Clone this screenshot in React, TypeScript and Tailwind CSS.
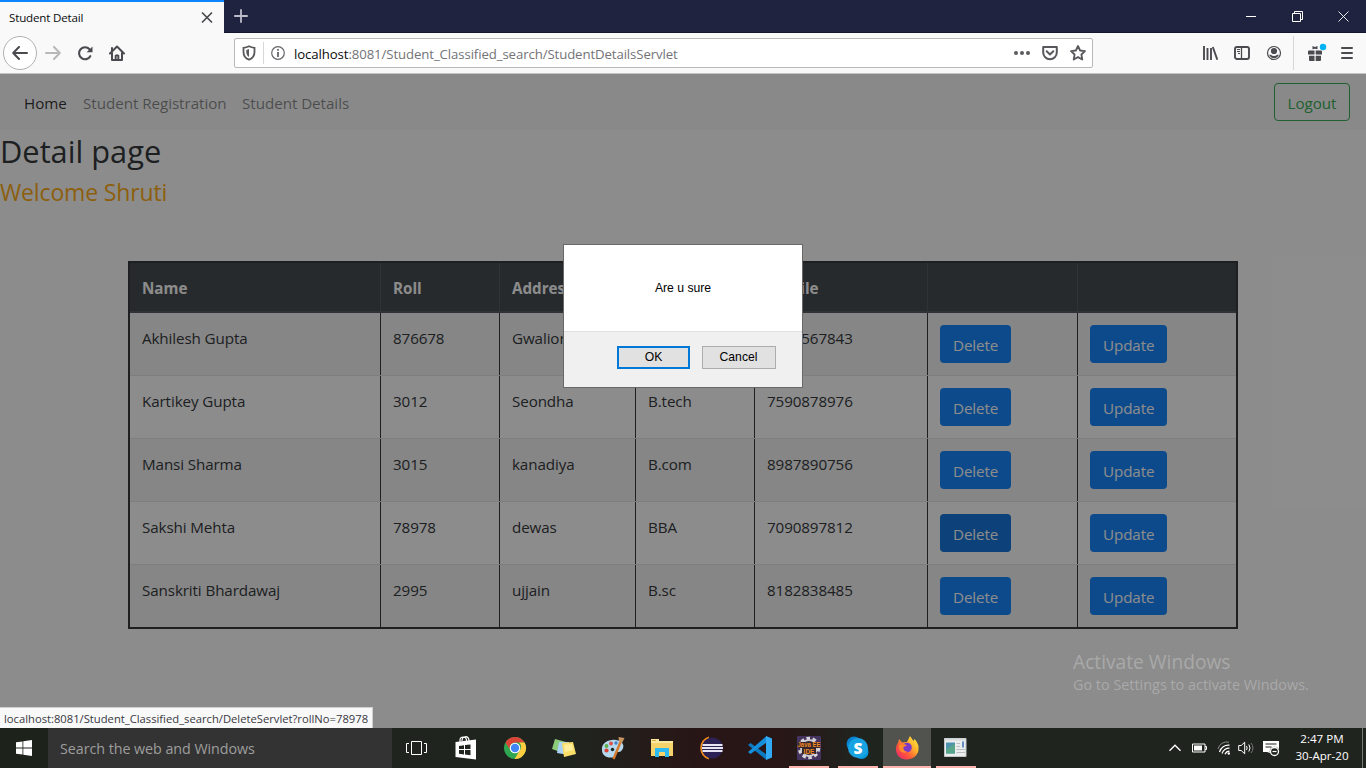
import type { ReactNode } from "react";

const students = [
  { name: "Akhilesh Gupta", roll: "876678", address: "Gwalior", course: "", mobile: "9234567843" },
  { name: "Kartikey Gupta", roll: "3012", address: "Seondha", course: "B.tech", mobile: "7590878976" },
  { name: "Mansi Sharma", roll: "3015", address: "kanadiya", course: "B.com", mobile: "8987890756" },
  { name: "Sakshi Mehta", roll: "78978", address: "dewas", course: "BBA", mobile: "7090897812", hovered: true },
  { name: "Sanskriti Bhardawaj", roll: "2995", address: "ujjain", course: "B.sc", mobile: "8182838485" },
];

const COLUMNS = "grid grid-cols-[250px_119px_136px_119px_173px_150px_159px]";

function TitleBar() {
  return (
    <div className="flex h-[33px] border-b border-[#14152e] bg-[#202340]">
      <div className="flex h-[33px] w-[224px] shrink-0 items-center justify-between border-t-2 border-[#0a84ff] bg-[#f9f9fa] pl-[9px] pr-[11px]">
        <span className="pt-px text-[11.6px] tracking-[-0.18px] text-[#0c0c0d]">Student Detail</span>
        <svg width="12" height="12" viewBox="0 0 12 12" stroke="#4a4a4f" strokeWidth="1.7" strokeLinecap="round">
          <path d="M1.5 1l9 9M10.500 1l-9 9" />
        </svg>
      </div>
      <div className="flex w-[33px] items-center justify-center">
        <svg width="14" height="14" viewBox="0 0 14 14" stroke="#bcbccb" strokeWidth="1.8" strokeLinecap="round">
          <path d="M7 .9v12.200M.9 7h12.200" />
        </svg>
      </div>
      <div className="ml-auto flex items-center gap-9 pr-[17px]">
        <svg width="10" height="11" viewBox="0 0 10 11" stroke="#fff"><path d="M0 5.500h10" /></svg>
        <svg width="11" height="11" viewBox="0 0 11 11" fill="none" stroke="#fff" className="-mr-px"><path d="M.5 2.500h8v8h-8zM2.500 2.500v-2h8v8h-2" /></svg>
        <svg width="11" height="11" viewBox="0 0 11 11" stroke="#fff" strokeWidth=".9"><path d="M.5 .5l10 10M10.500 .5l-10 10" /></svg>
      </div>
    </div>
  );
}

function Toolbar() {
  return (
    <div className="flex h-[41px] items-center border-b border-[#c4c4c6] bg-[#f9f9fa] pl-[3px]">
      <div className="flex h-[34px] w-[34px] items-center justify-center rounded-full border border-[#b1b1b3] bg-white">
        <svg width="16" height="14" viewBox="0 0 16 14" fill="none" stroke="#4a4a4f" strokeWidth="2" strokeLinecap="round" strokeLinejoin="round"><path d="M15 7H1.500M7 1L1.200 7 7 13" /></svg>
      </div>
      <svg className="ml-2" width="16" height="14" viewBox="0 0 16 14" fill="none" stroke="#b9b9bb" strokeWidth="2" strokeLinecap="round" strokeLinejoin="round"><path d="M1 7h13.500M9 1l5.800 6L9 13" /></svg>
      <svg className="ml-4" width="16" height="16" viewBox="0 0 16 16" fill="none" stroke="#4a4a4f" strokeWidth="2.100" strokeLinecap="round">
        <path d="M13.300 11.200A6 6 0 1 1 12.500 4.200" />
        <path d="M15.500 1.500v5.700H9.700z" fill="#4a4a4f" stroke="none" />
      </svg>
      <svg className="ml-4" width="16" height="16" viewBox="0 0 16 16" fill="none" stroke="#4a4a4f" strokeWidth="2" strokeLinecap="round" strokeLinejoin="round">
        <path d="M1 8.500L8 1.500l7 7M3 8v7h10V8M3 3v3" />
        <path d="M6.500 15v-4.500h3V15" strokeWidth="1.600" />
        <path d="M8 9.500v5.500" strokeWidth="1" />
      </svg>
      <div className="ml-[109px] flex h-[30px] w-[859px] items-center rounded-[2px] border border-[#b9b9bb] bg-white">
        <svg className="ml-[7px]" width="14" height="16" viewBox="0 0 14 16" fill="none" stroke="#58585c" strokeWidth="1.800">
          <path d="M1.500 2.800Q4.500 2.500 7 1.300q2.500 1.200 5.500 1.500V7c0 4-2.200 6.500-5.500 7.700C3.700 13.500 1.500 11 1.500 7z" />
          <path d="M7 4v8C5 10.800 4.300 9 4.300 7V4.900Q5.800 4.600 7 4z" fill="#58585c" stroke="none" />
        </svg>
        <div className="ml-[7px] h-[22px] w-px bg-[#d7d7db]" />
        <svg className="ml-[7px]" width="14" height="14" viewBox="0 0 14 14" fill="none" stroke="#65656a">
          <circle cx="7" cy="7" r="6.300" strokeWidth="1.200" /><path d="M7 3v1.700M7 6v5" strokeWidth="1.800" />
        </svg>
        <span className="ml-[9px] pt-[3px] text-[13.200px] tracking-[-0.095px] text-[#737377]"><span className="text-[#0c0c0d]">localhost</span>:8081/Student_Classified_search/StudentDetailsServlet</span>
        <div className="ml-auto flex items-center gap-3 pr-[6px]">
          <svg width="16" height="16" viewBox="0 0 16 16" fill="#5b5b5f"><circle cx="2" cy="8" r="2" /><circle cx="8" cy="8" r="2" /><circle cx="14" cy="8" r="2" /></svg>
          <svg width="16" height="16" viewBox="0 0 16 16" fill="none" stroke="#58585c" strokeWidth="2" strokeLinecap="round" strokeLinejoin="round"><path d="M1.200 2h13.600v5.500a6.800 6.800 0 0 1-13.600 0z" /><path d="M4.700 6.300L8 9.500l3.300-3.200" /></svg>
          <svg width="16" height="16" viewBox="0 0 16 16" fill="none" stroke="#58585c" strokeWidth="1.800" strokeLinejoin="round"><path d="M8 1l2.100 4.500 4.900.6-3.600 3.400.9 5L8 12.100l-4.300 2.400.9-5L1 6.100l4.900-.6z" /></svg>
        </div>
      </div>
      <div className="ml-auto flex items-center pr-3">
        <svg width="16" height="16" viewBox="0 0 16 16" stroke="#4a4a4f" strokeWidth="1.900"><path d="M2 1v14M5.500 3v12M9 3v12M10.800 2L15.300 14.700" /></svg>
        <svg className="ml-4" width="16" height="16" viewBox="0 0 16 16" fill="none" stroke="#4a4a4f"><rect x="1" y="2" width="14" height="12" rx="2" strokeWidth="1.900" /><path d="M7.500 2v12" strokeWidth="1.300" /><path d="M3 4.500h3M3 6.500h3M4 8.500h2" /></svg>
        <svg className="ml-4" width="16" height="16" viewBox="0 0 16 16" fill="#4a4a4f"><circle cx="8" cy="8" r="6.500" fill="none" stroke="#4a4a4f" strokeWidth="1.200" /><circle cx="8" cy="6" r="3.100" /><path d="M3.200 9.800h1.600c1.700 1.600 4.700 1.600 6.400 0h1.600c-.7 2-2.500 3.500-4.800 3.500s-4.100-1.500-4.800-3.500z" /></svg>
        <div className="ml-[11px] h-[34px] w-px bg-[#d7d7db]" />
        <svg className="ml-[13px]" width="20" height="20" viewBox="0 0 20 20" fill="#4a4a4f">
          <path d="M1 8.500Q1 7.500 2 7.500h5.500v4H1zM8.700 7.500H14q1 0 1 1v3H8.700zM2 12.700h5.500V18H3q-1 0-1-1zM8.700 12.700H14V17q0 1-1 1H8.700zM5.500 3L8 4l2.500-1v3.200L8 5.700l-2.500.5z" />
          <circle cx="16" cy="4" r="3.200" fill="#00b3f4" />
        </svg>
        <svg className="ml-[13px]" width="14" height="16" viewBox="0 0 14 16" stroke="#4a4a4f" strokeWidth="2" strokeLinecap="round"><path d="M2 3h10M2 8h10M2 13h10" /></svg>
      </div>
    </div>
  );
}

function PrimaryButton({ children, pressed = false }: { children: ReactNode; pressed?: boolean }) {
  return (
    <button className={`${pressed ? "bg-[#0069d9]" : "bg-[#007bff]"} flex h-[38px] items-center rounded-[4px] px-[13px] pt-px text-[15.200px] tracking-[-0.1px] leading-[24px] text-white`}>
      {children}
    </button>
  );
}

function StudentTable() {
  return (
    <div className="mx-auto mt-[56px] w-[1110px] border-2 border-[#212529] text-[15.200px] leading-[24px] tracking-[-0.11px]">
      <div className={`${COLUMNS} h-[50px] border-b-2 border-[#454d55] bg-[#343a40] font-bold text-white`}>
        {["Name", "Roll", "Address", "", "Mobile", "", ""].map((label, i) => (
          <div key={i} className={`${i ? "border-l border-[#454d55]" : ""} px-3 pt-[13px] tracking-normal`}>{label}</div>
        ))}
      </div>
      {students.map((s, row) => (
        <div key={s.roll} className={`${COLUMNS} ${row % 2 ? "" : "bg-[#f2f2f2]"} ${row < 4 ? "h-[63px] border-b border-[#dee2e6]" : "h-[62px]"}`}>
          {[s.name, s.roll, s.address, s.course, s.mobile].map((value, i) => (
            <div key={i} className={`${i ? "border-l border-[#212529]" : ""} px-3 pt-[13px]`}>{value}</div>
          ))}
          <div className="border-l border-[#212529] px-3 pt-3"><PrimaryButton pressed={s.hovered}>Delete</PrimaryButton></div>
          <div className="border-l border-[#212529] px-3 pt-3"><PrimaryButton>Update</PrimaryButton></div>
        </div>
      ))}
    </div>
  );
}

function ConfirmDialog() {
  return (
    <div className="absolute left-[563px] top-[170px] flex h-[144px] w-[240px] flex-col border border-[#686868] bg-white font-['Liberation_Sans',sans-serif] text-[12.200px] text-black">
      <div className="flex h-[86px] items-center justify-center">Are u sure</div>
      <div className="flex flex-1 items-start justify-end gap-3 border-t border-[#dfdfdf] bg-[#f0f0f0] pr-[26px] pt-[14px]">
        <button className="h-[23px] w-[73px] border-2 border-[#0078d7] bg-[#e1e1e1]">OK</button>
        <button className="h-[23px] w-[74px] border border-[#adadad] bg-[#e1e1e1] pr-px">Cancel</button>
      </div>
    </div>
  );
}

function WebPage() {
  return (
    <main className="relative h-[654px] overflow-hidden bg-white text-[#212529]">
      <nav className="flex h-14 items-center bg-[#f8f9fa] pl-6 pr-4 text-[15.200px] tracking-[-0.05px]">
        <a className="w-[59px] pt-[2px] text-black/90">Home</a>
        <a className="w-[159px] pt-[2px] text-black/50">Student Registration</a>
        <a className="pt-[2px] text-black/50">Student Details</a>
        <button className="ml-auto h-[38px] w-[76px] rounded-[4px] border border-[#28a745] pt-[2px] text-[#28a745]">Logout</button>
      </nav>
      <h2 className="mb-2 h-[38px] text-[30.800px] leading-[42px]">Detail page</h2>
      <h4 className="h-[29px] text-[23px] leading-[32px] tracking-[-0.15px] text-[#ffa500]">Welcome Shruti</h4>
      <StudentTable />
      <div className="absolute inset-0 bg-[#1a1a1a]/50" />
      <ConfirmDialog />
      <div className="absolute left-[1073px] top-[575px] whitespace-nowrap text-[#a9a9a9]">
        <div className="text-[19.200px] leading-[25px]">Activate Windows</div>
        <div className="text-[14.400px] leading-[21px]">Go to Settings to activate Windows.</div>
      </div>
      <div className="absolute bottom-0 left-0 flex h-[21px] w-[373px] items-center whitespace-nowrap border-r border-t border-[#d0d0d2] bg-[#f9f9fa] pl-1 pt-[2px] text-[11.220px] text-[#38383d]">
        localhost:8081/Student_Classified_search/DeleteServlet?rollNo=78978
      </div>
    </main>
  );
}

function AppIcon({ children }: { children: ReactNode }) {
  return <svg width="24" height="24" viewBox="0 0 24 24" fill="none">{children}</svg>;
}

const taskbarApps: { id: string; state?: "open" | "active"; icon: ReactNode }[] = [
  { id: "taskview", icon: <AppIcon><path d="M6.500 5.500h10v13h-10zM4 7.500H1.500v9H4M19 7.500h2.500v9H19" stroke="#fff" strokeWidth="1" /></AppIcon> },
  { id: "store", icon: <AppIcon><path d="M1.500 6L22 3.500v20L1.500 21z" fill="#fff" /><path d="M6 8V4c0-4 6-4 6.500 0v3M8 5c0-5 6-6 7-1v3" stroke="#fff" strokeWidth="1.200" /><path d="M5 10l5-.7V13H5zM11 9.100l5.500-.7V13H11zM5 14h5v4.400l-5-.6zM11 14h5.500v5.200l-5.500-.6z" fill="#20241f" /></AppIcon> },
  {
    id: "chrome", icon: <AppIcon>
      <circle cx="12" cy="12" r="11" fill="#2fa650" />
      <path d="M2.500 6.500A11 11 0 0 1 21.600 6.600H12a5.300 5.300 0 0 0-4.700 8z" fill="#db4437" />
      <path d="M21.600 6.600A11 11 0 0 1 11.600 23l4.900-8.200a5.300 5.300 0 0 0-.5-8.200z" fill="#ffcd40" />
      <circle cx="12" cy="12" r="5.300" fill="#fff" /><circle cx="12" cy="12" r="4.200" fill="#4285f4" />
    </AppIcon>,
  },
  { id: "notes", icon: <AppIcon><path d="M3 3l11 3-3 11L0 13z" fill="#8ccb78" /><path d="M7 6h10v13L5 17z" fill="#a9d2f5" /><path d="M10 7l11-1 3 12-12 3z" fill="#f9df69" /><path d="M12 9l8-1 1 6-8 2z" fill="#ffef9b" /></AppIcon> },
  {
    id: "paint", icon: <AppIcon>
      <path d="M1 14C0 7 8 3 15 4c7 1 9 6 6 10-2 3-4 1-6 3-1 2 1 3-2 4-6 2-12-1-12-7z" fill="#b5d8ee" />
      <circle cx="5.500" cy="14.500" r="2.100" fill="#d64036" /><circle cx="5.500" cy="10" r="1.900" fill="#5fae4a" /><circle cx="10" cy="7.500" r="1.900" fill="#df5144" /><circle cx="15" cy="7" r="1.700" fill="#4682c7" /><circle cx="11.500" cy="13.500" r="1.700" fill="#20241f" />
      <path d="M12.500 23L20 5" stroke="#d8792b" strokeWidth="2.400" /><path d="M17.500 1l6 1-2.500 5-3-1z" fill="#c99661" />
    </AppIcon>,
  },
  { id: "explorer", icon: <AppIcon><path d="M1 3h8v2h14v15H1z" fill="#f7d36b" /><path d="M1 3h8v2h14v2H1z" fill="#fbe8a1" /><path d="M2 4h4v1H2z" fill="#d7a936" /><path d="M5 12h14v9h-4v-5H9v5H5z" fill="#2dbbf1" /></AppIcon> },
  { id: "eclipse", icon: <AppIcon><path d="M10 1.500A11 11 0 0 0 10 22.500" stroke="#f18c1c" strokeWidth="2.200" /><circle cx="13.300" cy="12" r="10.500" fill="#2c2255" /><path d="M3.500 9h20M3 12h21M3.500 15h20" stroke="#e8e6f2" strokeWidth="1.800" /></AppIcon> },
  { id: "vscode", icon: <AppIcon><path d="M0 9l2.500-2L20 19.500 18.500 24z" fill="#0c79c1" /><path d="M0 16l2.500 2L20 5.500 18.500 0z" fill="#168fdb" /><path d="M18 0l6 2.500v19L18 24z" fill="#32a9f3" /></AppIcon> },
  {
    id: "javaee", state: "open", icon: <AppIcon>
      <rect width="24" height="24" rx="1" fill="#44325f" />
      <circle cx="12" cy="12" r="9.500" stroke="#d7d5d9" strokeWidth="3.500" strokeDasharray="3.500 2.500" />
      <circle cx="12" cy="12" r="8" fill="#2e243b" stroke="#d0ccd2" strokeWidth="2" />
      <path d="M1 6h22v6h-4v6H5v-6H1z" fill="#35252d" />
      <text x="12" y="11.300" textAnchor="middle" fill="#f08a25" fontSize="6.500" fontWeight="700" textLength="23" lengthAdjust="spacingAndGlyphs" className="font-['Liberation_Sans']">Java EE</text>
      <text x="12" y="18" textAnchor="middle" fill="#f08a25" fontSize="6.500" fontWeight="700" className="font-['Liberation_Sans']">IDE</text>
    </AppIcon>,
  },
  { id: "skype", state: "open", icon: <AppIcon><circle cx="8" cy="8" r="7.500" fill="#0b82cf" /><circle cx="15.500" cy="16" r="7" fill="#0798dc" /><circle cx="12" cy="12" r="10" fill="#18a4e2" /><text x="12" y="17.500" textAnchor="middle" fill="#fff" fontSize="15.500" fontWeight="800">S</text></AppIcon> },
  {
    id: "firefox", state: "active", icon: <AppIcon>
      <defs><linearGradient id="flame" x1="1" y1="0" x2="0" y2="1"><stop offset="0" stopColor="#fff04a" /><stop offset=".35" stopColor="#ffb52a" /><stop offset=".65" stopColor="#ff563a" /><stop offset="1" stopColor="#e51d78" /></linearGradient></defs>
      <path d="M4 3l3 3.500 5-.5 3-6 3.500 5 1-2c2 2 3 4 4 7v4c-1 6-6 9.500-12 9.500C5 23.500 1 19 1 13c0-3 1-5 2-6z" fill="url(#flame)" />
      <circle cx="12" cy="11.500" r="4.800" fill="#7c39c6" /><path d="M4 9c4-1 6-1 8 .500L8.500 11c-.5 3 1.500 4.500 4 4.500-4 3-8.500 0-8.500-4z" fill="#ff8a2b" />
    </AppIcon>,
  },
  { id: "window", state: "open", icon: <AppIcon><path d="M.5 2.500h21.500v18H.5z" fill="#eceeee" stroke="#c2c6c8" /><path d="M.5 2.500H22v2H.5z" fill="#d8dcde" /><path d="M2 6.500h9v11H2z" fill="#4e94b0" /><path d="M2 13.500l9-6v10H2z" fill="#59a68a" /><path d="M12.500 7.500H16M12.500 10.500H16M12.500 13.500H21M12.500 16.500H21" stroke="#b9bec1" /><path d="M19 5.500v6" stroke="#386fb5" strokeWidth="1.500" /></AppIcon> },
];

function Taskbar() {
  return (
    <footer className="flex h-10 bg-[linear-gradient(90deg,#1d231b_0%,#20241f_42%,#281616_51%,#281616_57%,#20241f_63%,#20241f_100%)]">
      <div className="flex w-12 items-center justify-center">
        <svg width="16" height="16" viewBox="0 0 16 16" fill="#fff"><path d="M0 2.300l6.500-.9v6.100H0zM7.300 1.300L16 0v7.500H7.300zM0 8.400h6.500v6.200L0 13.700zM7.300 8.400H16V16l-8.700-1.300z" /></svg>
      </div>
      <div className="flex w-[344px] items-center bg-[#333] pl-3 pt-px text-[14.300px] tracking-[-0.05px] text-[#9d9d9d]">Search the web and Windows</div>
      <div className="ml-px flex gap-px">
        {taskbarApps.map(({ id, state, icon }) => (
          <div key={id} className={`flex w-12 flex-col items-center ${state === "active" ? "bg-[#51534f]" : ""}`}>
            <div className="flex h-[38px] items-center pt-[2px]">{icon}</div>
            {state && <div className={`h-[2px] bg-[#ffb4ad] ${state === "active" ? "w-full" : "w-10"}`} />}
          </div>
        ))}
      </div>
      <div className="ml-auto flex items-center text-white">
        <svg width="12" height="8" viewBox="0 0 12 8" fill="none" stroke="#fff" strokeWidth="1.300"><path d="M.5 6.700L6 1.200l5.500 5.500" /></svg>
        <svg className="ml-[11px]" width="15" height="10" viewBox="0 0 15 10" fill="none" stroke="#fff"><path d="M.5 1h12.500v8H.5zM13 3.500h1.500v3H13" /><path d="M2 2.500h8v5H2z" fill="#fff" stroke="none" /></svg>
        <svg className="ml-[10px]" width="14" height="14" viewBox="0 0 14 14" fill="none" stroke="#fff"><path d="M1 8A9 9 0 0 1 12 1.200" stroke="#8a8d89" /><path d="M2.500 11A9 9 0 0 1 12.500 4.200M5 12.500a8 8 0 0 1 7.500-5.300M8 13.200a5 5 0 0 1 4.500-3" strokeWidth="1.200" /><circle cx="11.800" cy="12.500" r="1.200" fill="#fff" stroke="none" /></svg>
        <svg className="ml-[7px]" width="17" height="14" viewBox="0 0 17 14" fill="none" stroke="#fff"><path d="M.7 4.500h2.500l3.500-3.300v11.600L3.200 9.500H.7z" /><path d="M8.500 5q1.300 2 0 4M10.800 3.500q2.500 3.500 0 7" /><path d="M13 2q4 5 0 10" stroke="#777a76" /></svg>
        <svg className="ml-[8px]" width="17" height="17" viewBox="0 0 17 17" fill="none"><path d="M0 1h16v9H7v3l-3-1H0z" fill="#fff" /><path d="M2.500 4h11M2.500 7h6" stroke="#20241f" strokeWidth="1.200" /><circle cx="11.500" cy="11.500" r="4.800" fill="#20241f" /><circle cx="11.500" cy="11.500" r="4" stroke="#fff" strokeWidth="1.300" /><path d="M9.500 11.500h4" stroke="#fff" strokeWidth="1.200" /></svg>
        <div className="ml-[13px] w-[58px] whitespace-nowrap text-center text-[11.600px] leading-[17px]"><div className="-mt-[3px]">2:47 PM</div><div>30-Apr-20</div></div>
        <div className="ml-[11px] h-10 w-px bg-[#777a76]" /><div className="w-[3px]" />
      </div>
    </footer>
  );
}

export default function App() {
  return (
    <div className="h-[768px] w-[1366px] overflow-hidden font-['Open_Sans','Noto_Sans',sans-serif]">
      <TitleBar />
      <Toolbar />
      <WebPage />
      <Taskbar />
    </div>
  );
}
